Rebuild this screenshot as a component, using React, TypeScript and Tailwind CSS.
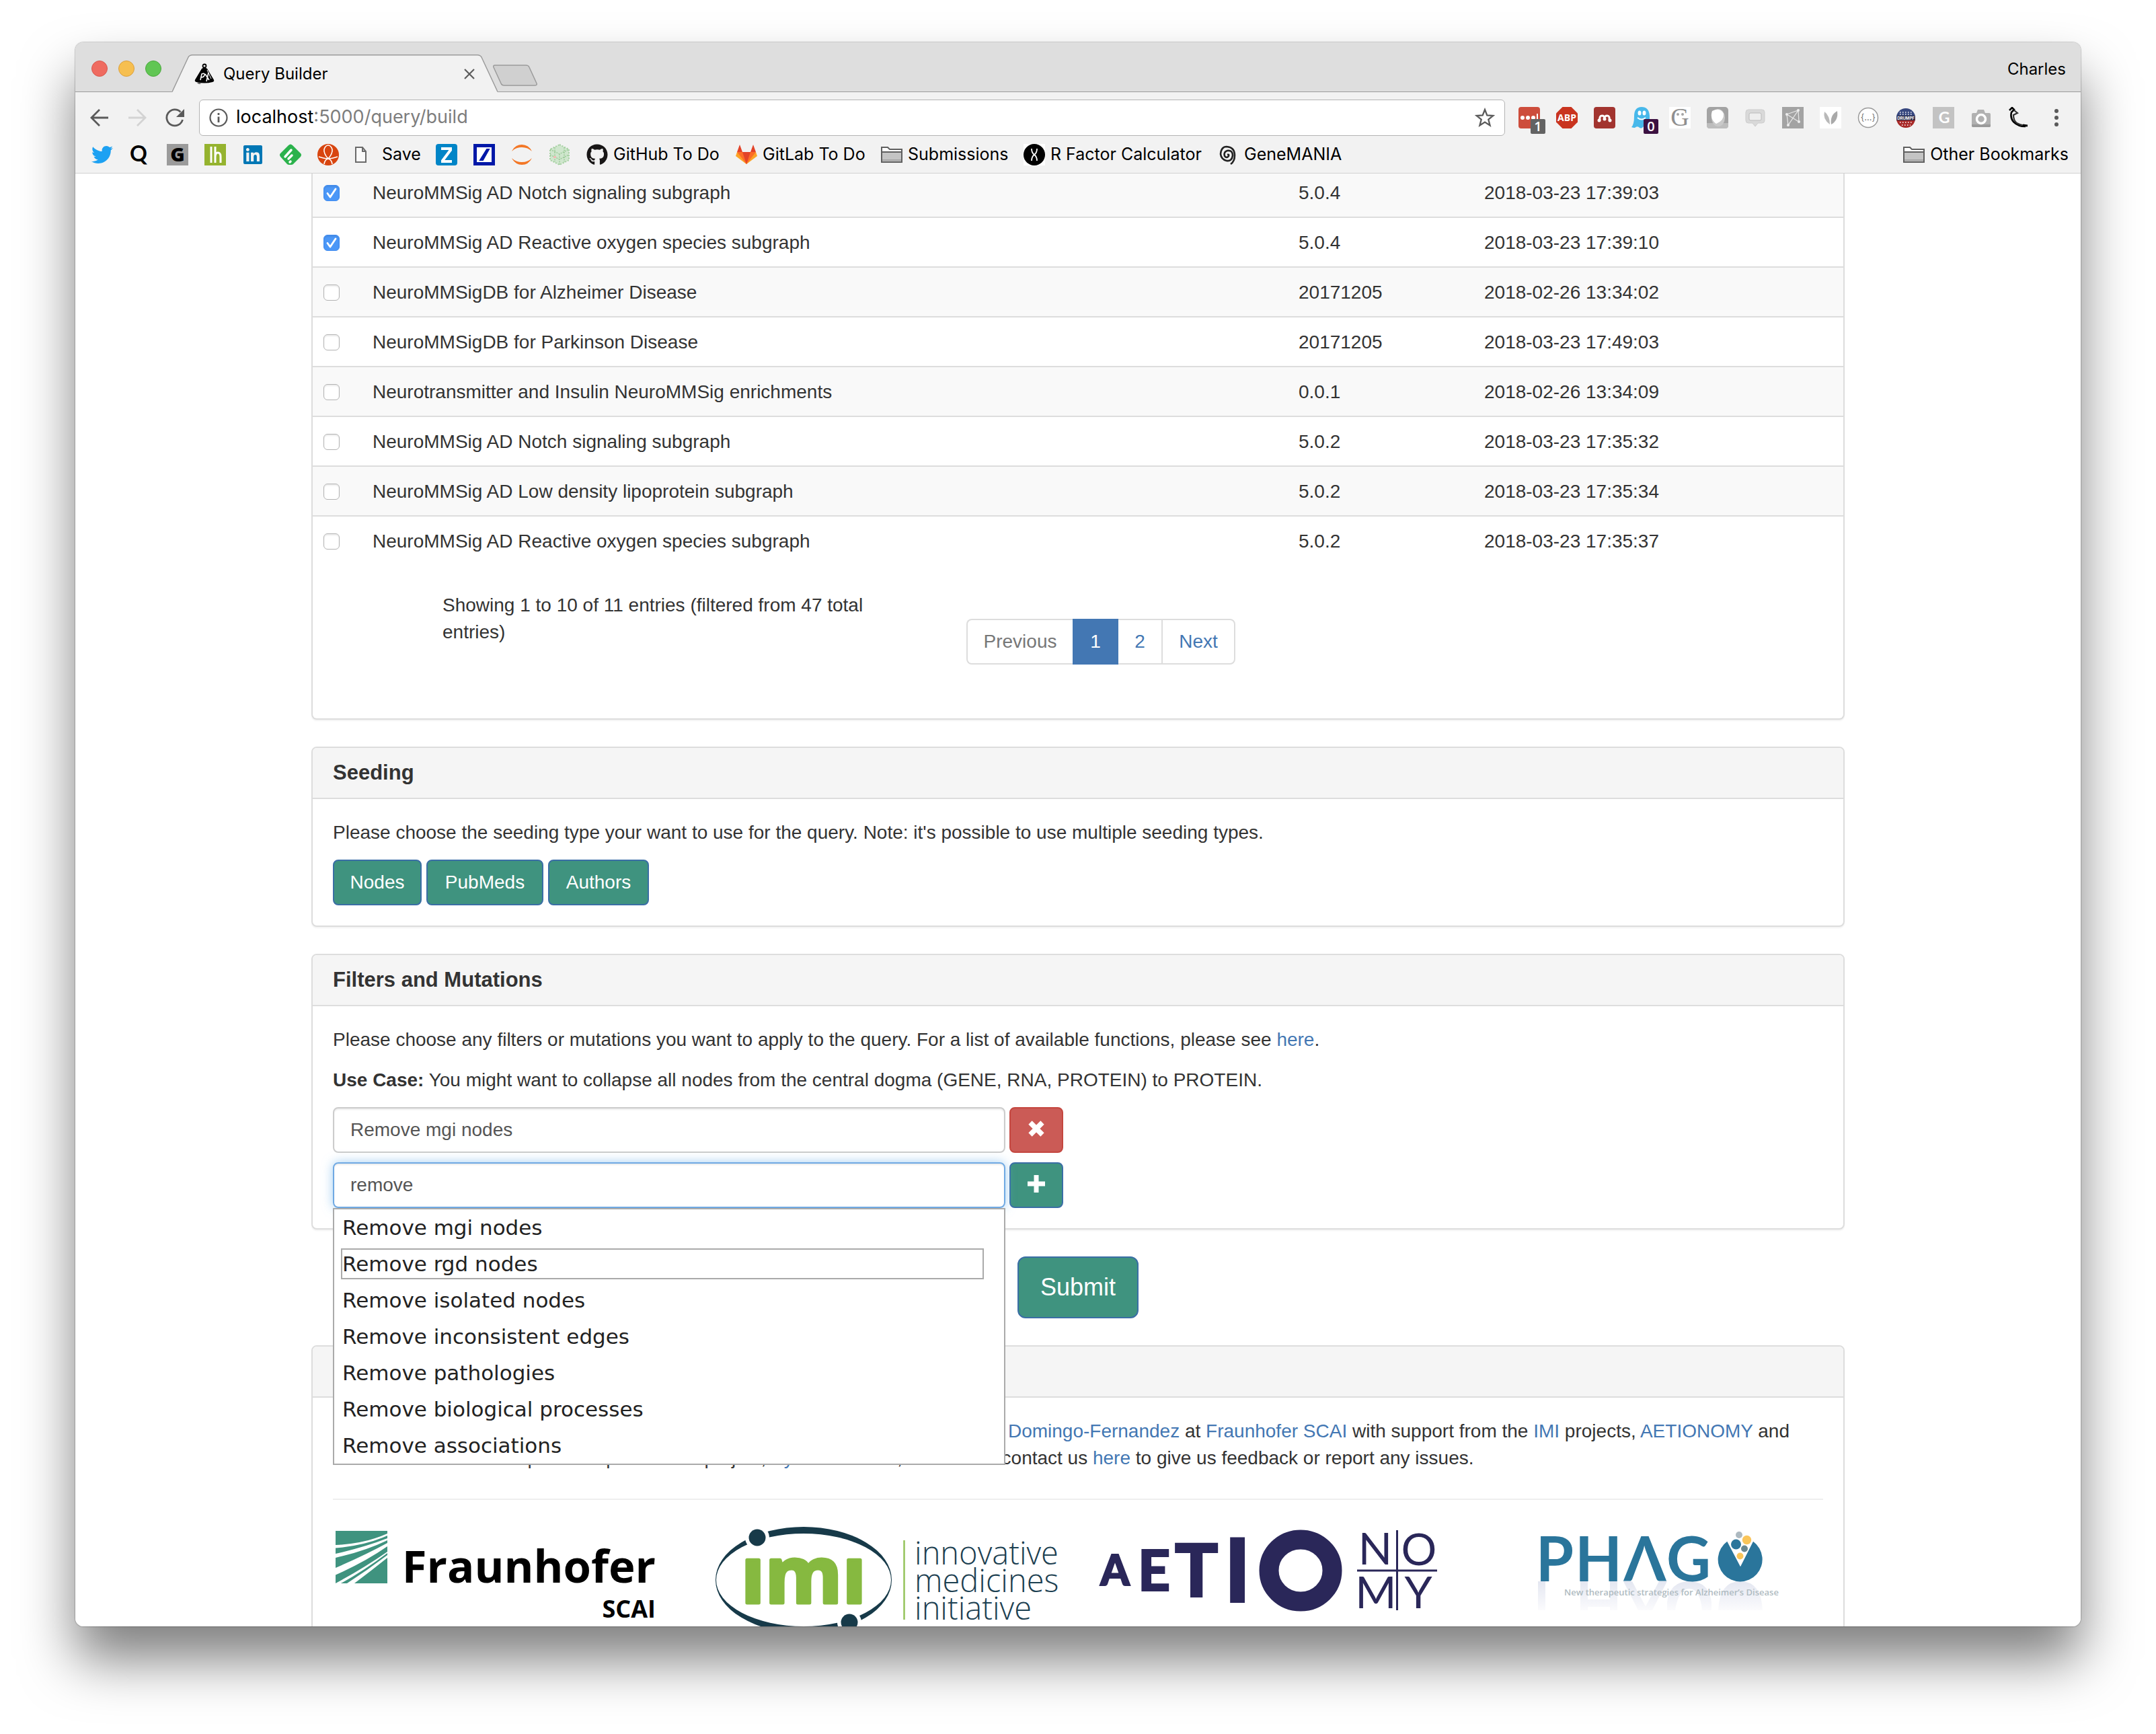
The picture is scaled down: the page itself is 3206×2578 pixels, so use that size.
import React, { useState } from "react";
import { FaGithub, FaTwitter, FaLinkedin } from "react-icons/fa";

const ui = "font-['Inter',sans-serif]";

function Fav({ children, label, box = "0 0 32 32" }: { children: React.ReactNode; label: string; box?: string }) {
  return (
    <svg viewBox={box} className="block h-8 w-8 shrink-0" role="img" aria-label={label}>
      {children}
    </svg>
  );
}

function Folder() {
  return (
    <Fav label="folder">
      <path d="M1 27V5h9l3 3h18v19z" fill="#fff" stroke="#5f5f5f" strokeWidth="2" />
      <path d="M2 13h28v13H2z" fill="#c4c4c4" />
      <path d="M1 12h30M1 27h30" stroke="#5f5f5f" strokeWidth="2" />
      <path d="M2 24h28" stroke="#a5a5a5" strokeWidth="2" />
    </Fav>
  );
}

function Bookmark({ icon, text, cls }: { icon: React.ReactNode; text?: string; cls: string }) {
  return (
    <a href="#" className={"flex shrink-0 items-center gap-2 whitespace-nowrap " + cls}>
      {icon}
      {text}
    </a>
  );
}

function TabStrip() {
  return (
    <div className="flex h-[74px] shrink-0 border-b border-[#9b9b9b] bg-[#dedede] pr-[22px] pl-6">
      <div className="flex h-[78px] items-center gap-4">
        <button aria-label="Close" className="h-6 w-6 rounded-full border border-[#d8584f] bg-[#ef6b60]" />
        <button aria-label="Minimize" className="h-6 w-6 rounded-full border border-[#dba03f] bg-[#f6bf50]" />
        <button aria-label="Zoom" className="h-6 w-6 rounded-full border border-[#4aa83d] bg-[#61c654]" />
      </div>
      <div className="relative mt-[18px] ml-4 h-14 w-[484px]">
        <svg viewBox="0 0 484 56" preserveAspectRatio="none" className="absolute inset-0 h-full w-full" aria-hidden="true">
          <path d="M0 56 L24 4 Q26 1 30 1 H454 Q458 1 460 4 L484 56 Z" fill="#f2f2f2" />
          <path d="M0 55.5 L24 4 Q26 .8 30 .8 H454 Q458 .8 460 4 L484 55.5" fill="none" stroke="#9b9b9b" strokeWidth="1.5" />
        </svg>
        <div className={"relative flex h-full items-center pt-0.5 pr-[34px] pl-8 text-2xl text-black " + ui}>
          <svg viewBox="0 0 32 32" className="mr-3 h-8 w-8" role="img" aria-label="PyBEL">
            <circle cx="16" cy="4" r="2.5" fill="none" stroke="#000" strokeWidth="1.8" />
            <path d="M12 8q4-3 8 0l9 15q3 4-1 5-12 3-24 0-4-1-1-5z" fill="#000" />
            <path d="M5 29q3 3 6 1z" fill="#000" />
            <path d="M10 25l2-9q5-2 4 2-1 3-5 3M17 16l6 9M22 14l-3 13" fill="none" stroke="#fff" strokeWidth="1.6" />
            <path d="M20 10l6 13" stroke="#fff" strokeWidth="1" />
          </svg>
          <span>Query Builder</span>
          <button aria-label="Close tab" className="ml-auto">
            <svg viewBox="0 0 16 16" className="h-4 w-4" aria-hidden="true">
              <path d="M1 1l14 14M15 1L1 15" stroke="#5c5c5c" strokeWidth="2.2" />
            </svg>
          </button>
        </div>
      </div>
      <button aria-label="New tab" className="mt-[33px] -ml-2 h-8">
        <svg viewBox="0 0 68 32" className="h-8 w-[68px]" aria-hidden="true">
          <path d="M4 1h46q4 0 5 3l11 24q1 3-3 3H18q-4 0-5-3L2 4Q1 1 4 1z" fill="#d0d0d0" stroke="#9b9b9b" strokeWidth="1.5" />
        </svg>
      </button>
      <button className={"ml-auto h-20 text-2xl text-black " + ui}>Charles</button>
    </div>
  );
}

function Extensions() {
  return (
    <div className="flex items-center gap-6">
      <button className="relative" aria-label="LastPass">
        <Fav label="LastPass">
          <rect width="32" height="32" rx="4" fill="#cd4d3c" />
          <circle cx="6" cy="16" r="3" fill="#fff" /><circle cx="14" cy="16" r="3" fill="#fff" /><circle cx="22" cy="16" r="3" fill="#fff" />
          <path d="M28 10v12" stroke="#fff" strokeWidth="2" />
        </Fav>
        <span className="absolute top-[18px] left-[18px] h-[22px] w-[22px] rounded-xs bg-[#636363] text-center font-['Open_Sans',sans-serif] text-xl leading-[22px] font-semibold text-white">1</span>
      </button>
      <button aria-label="Adblock Plus">
        <Fav label="Adblock Plus">
          <path d="M9.5 0h13L32 9.5v13L22.5 32h-13L0 22.500v-13z" fill="#c9341f" />
          <text x="16" y="21" textAnchor="middle" fontSize="14" fontWeight="700" fill="#fff" fontFamily="Open Sans, sans-serif">ABP</text>
        </Fav>
      </button>
      <button aria-label="Mendeley">
        <Fav label="Mendeley">
          <rect width="32" height="32" rx="4" fill="#a2342f" />
          <path d="M9 20q-1-7 3-7t4 4q0-4 4-4t3 7" fill="none" stroke="#fff" strokeWidth="3" />
          <circle cx="16" cy="18" r="2.500" fill="#fff" /><circle cx="8" cy="20" r="2.500" fill="#fff" /><circle cx="24" cy="20" r="2.500" fill="#fff" />
        </Fav>
      </button>
      <button className="relative" aria-label="Ghostery">
        <Fav label="Ghostery">
          <path d="M4 14Q4 0 15 0t12 13v17q-3 2-5 0-3-2-5 0-3 3-6 0-3-2-6 1-3 0-5-1 4-4 4-16z" fill="#48b8ea" />
          <ellipse cx="12" cy="9" rx="2.500" ry="3.500" fill="#fff" /><ellipse cx="19" cy="9" rx="2.500" ry="3.500" fill="#fff" />
          <path d="M9 16q6 5 12 0" fill="none" stroke="#fff" strokeWidth="2" />
        </Fav>
        <span className="absolute top-[18px] left-[18px] h-[22px] w-[22px] rounded-xs bg-[#3c1141] text-center font-['Open_Sans',sans-serif] text-xl leading-[22px] font-semibold text-white">0</span>
      </button>
      <button aria-label="Grammar">
        <Fav label="Grammar">
          <rect width="32" height="32" fill="#fff" />
          <text x="16" y="28" textAnchor="middle" fontSize="38" fill="#8f8f8f" fontFamily="Liberation Serif, serif">G</text>
          <circle cx="13" cy="11" r="2" fill="#a5a5a5" /><circle cx="20" cy="11" r="2" fill="#a5a5a5" />
        </Fav>
      </button>
      <button aria-label="Pearl">
        <Fav label="Pearl">
          <rect width="32" height="32" rx="5" fill="#a3a3a3" />
          <path d="M0 24h32v4q0 4-4 4H4q-4 0-4-4z" fill="#bdbdbd" />
          <ellipse cx="17" cy="16" rx="10" ry="13" fill="#c9c9c9" />
          <path d="M8 6q12-6 17 4 1 10-11 15Q4 18 8 6z" fill="#fff" />
        </Fav>
      </button>
      <button aria-label="Comments">
        <Fav label="Comments">
          <path d="M6 4h20q4 0 4 4v12q0 4-4 4h-6l-4 5-4-5H6q-4 0-4-4V8q0-4 4-4z" fill="#d9d9d9" stroke="#cdcdcd" />
          <rect x="7" y="9" width="18" height="11" rx="2" fill="#eee" stroke="#bbb" />
        </Fav>
      </button>
      <button aria-label="Graph">
        <Fav label="Graph">
          <rect width="32" height="32" fill="#a3a3a3" />
          <path d="M7 11L24 5 9 27 7 11M24 5l1 17L7 11" fill="none" stroke="#e6e6e6" strokeWidth="1.3" />
          <circle cx="7" cy="11" r="2" fill="#eee" /><circle cx="24" cy="5" r="2" fill="#eee" /><circle cx="9" cy="27" r="2" fill="#eee" /><circle cx="25" cy="22" r="2" fill="#eee" />
        </Fav>
      </button>
      <button aria-label="Leaf">
        <Fav label="Leaf">
          <rect width="32" height="32" fill="#fff" />
          <path d="M15 26Q4 18 7 7q8 6 8 19z" fill="#b9b9b9" /><path d="M17 26Q15 12 26 6q2 14-9 20z" fill="#a9a9a9" />
        </Fav>
      </button>
      <button aria-label="Braces">
        <Fav label="Braces">
          <circle cx="16" cy="16" r="14.500" fill="#fff" stroke="#9a9a9a" strokeWidth="1.5" />
          <text x="16" y="20" textAnchor="middle" fontSize="13" fill="#777" fontFamily="Inter, sans-serif">{"{...}"}</text>
        </Fav>
      </button>
      <button aria-label="Drumpf">
        <Fav label="Drumpf">
          <circle cx="16" cy="16" r="14" fill="#37477f" />
          <path d="M2 17h28a14 14 0 0 1-28 0z" fill="#a82a28" />
          <path d="M2.500 13h27v7h-27z" fill="#2b2b46" />
          <path d="M7 8h19M7 11h19" stroke="#fff" strokeWidth="1.5" strokeDasharray="1.500 2.500" />
          <path d="M7 23h19M10 27h13" stroke="#fff" strokeWidth="1.5" strokeDasharray="1.500 2.500" />
          <text x="16" y="18.500" textAnchor="middle" fontSize="6" fontWeight="700" fill="#fff" fontFamily="Inter, sans-serif">DRUMPF</text>
        </Fav>
      </button>
      <button aria-label="G tool">
        <Fav label="G tool">
          <rect width="32" height="32" fill="#c3c3c3" />
          <text x="17" y="24" textAnchor="middle" fontSize="23" fontWeight="700" fill="#fff" fontFamily="Lato, sans-serif">G</text>
        </Fav>
      </button>
      <button aria-label="Camera">
        <Fav label="Camera">
          <path d="M4 9h5l2-5h9l2 5h6q2 0 2 2v17q0 2-2 2H4q-2 0-2-2V11q0-2 2-2z" fill="#b1b1b1" />
          <path d="M2 26h28v2q0 2-2 2H4q-2 0-2-2z" fill="#9a9a9a" />
          <circle cx="16" cy="18" r="6.500" fill="#b1b1b1" stroke="#fff" strokeWidth="3.500" />
        </Fav>
      </button>
      <button aria-label="Flask">
        <Fav label="Flask">
          <path d="M2 5l4-4 3 3-4 4q-2 8 3 14 7 7 18 7" fill="none" stroke="#000" strokeWidth="2.600" />
          <path d="M9 5l5 4-6 3q0 8 5 12 5 3 12 4" fill="none" stroke="#333" strokeWidth="2.200" />
          <path d="M22 27l7 1" stroke="#000" strokeWidth="3" />
        </Fav>
      </button>
    </div>
  );
}

function Toolbar() {
  return (
    <div className="flex h-[75px] shrink-0 items-center bg-[#f2f2f2] pr-7 pl-[22px]">
      <button aria-label="Back">
        <svg viewBox="0 0 28 28" className="h-7 w-7" aria-hidden="true"><path d="M27 14H3M14 2L2 14l12 12" fill="none" stroke="#5a5a5a" strokeWidth="2.800" /></svg>
      </button>
      <button aria-label="Forward" className="ml-7" disabled>
        <svg viewBox="0 0 28 28" className="h-7 w-7" aria-hidden="true"><path d="M1 14h24M14 2l12 12-12 12" fill="none" stroke="#d3d3d3" strokeWidth="2.800" /></svg>
      </button>
      <button aria-label="Reload" className="ml-7">
        <svg viewBox="0 0 28 28" className="h-7 w-7" aria-hidden="true"><path d="M25.500 17A12 12 0 1 1 22.500 5.500" fill="none" stroke="#5a5a5a" strokeWidth="2.800" /><path d="M28 1v12H16z" fill="#5a5a5a" /></svg>
      </button>
      <div className={"mr-5 ml-[22px] flex h-[54px] flex-1 items-center rounded-md border border-[#b4b4b4] bg-white pr-3.5 pl-3.5 text-[27px] text-black " + ui}>
        <svg viewBox="0 0 28 28" className="mr-3 h-7 w-7" role="img" aria-label="Site information">
          <circle cx="14" cy="14" r="12.500" fill="none" stroke="#5a5a5a" strokeWidth="2.200" />
          <path d="M14 12.500V21M14 7v3" stroke="#5a5a5a" strokeWidth="2.800" />
        </svg>
        <span>localhost</span><span className="text-[#7d7d7d]">:5000/query/build</span>
        <button aria-label="Bookmark this page" className="ml-auto">
          <svg viewBox="0 0 30 30" className="h-[30px] w-[30px]" aria-hidden="true"><path d="M15 3l3.300 8.400 9 .6-7 5.700 2.300 8.800L15 21.600l-7.600 4.900 2.300-8.800-7-5.700 9-.6z" fill="none" stroke="#5a5a5a" strokeWidth="2.300" /></svg>
        </button>
      </div>
      <Extensions />
      <button aria-label="Menu" className="ml-8">
        <svg viewBox="0 0 16 32" className="h-8 w-4" aria-hidden="true"><circle cx="8" cy="6" r="3" fill="#5a5a5a" /><circle cx="8" cy="16" r="3" fill="#5a5a5a" /><circle cx="8" cy="26" r="3" fill="#5a5a5a" /></svg>
      </button>
    </div>
  );
}

function BookmarksBar() {
  return (
    <div className={"flex h-[46px] shrink-0 items-center border-b border-[#d2d2d2] bg-[#f2f2f2] pr-[18px] pb-2.5 pl-6 text-[25px] text-black " + ui}>
      <Bookmark cls="w-14" icon={<FaTwitter className="h-8 w-8 text-[#1da1f2]" aria-label="Twitter" />} />
      <Bookmark cls="w-14" icon={<Fav label="Quora"><text x="14" y="26" textAnchor="middle" fontSize="32" fontWeight="700" fontFamily="Lato, sans-serif">Q</text></Fav>} />
      <Bookmark cls="w-14" icon={<Fav label="Grid"><rect width="32" height="32" fill="#9b9b9b" /><text x="16" y="26" textAnchor="middle" fontSize="29" fontWeight="800" fontFamily="Open Sans, sans-serif">G</text></Fav>} />
      <Bookmark cls="w-14" icon={<Fav label="lh"><rect width="32" height="32" fill="#95b32f" /><path d="M10 4v24M16 4v24M16 20q0-7 4-7t4 6v9" fill="none" stroke="#fff" strokeWidth="3" /></Fav>} />
      <Bookmark cls="w-14" icon={<FaLinkedin className="h-8 w-8 text-[#0077b5]" aria-label="LinkedIn" />} />
      <Bookmark cls="w-14" icon={<Fav label="Feedly"><path d="M13 2q3-3 6 0l12 12q2 2 0 5L20 30q-1 1-3 1h-3q-2 0-3-1L1 19q-2-3 0-5z" fill="#2bb24c" /><path d="M8 19L17 9M13 22l5-5M15 27l1-1" stroke="#fff" strokeWidth="3.500" strokeLinecap="round" /></Fav>} />
      <Bookmark cls="w-14" icon={<Fav label="Knot"><circle cx="16" cy="16" r="16" fill="#d8450f" /><path d="M16 22Q9 14 10 8q2-6 6-6t6 6q1 6-6 14zM2 19q9 3 14 3 5 0 14-3M10 30q1-7 6-8 5 1 6 8" fill="none" stroke="#fff" strokeWidth="1.600" /></Fav>} />
      <Bookmark cls="w-[120px]" text="Save" icon={<Fav label="page" box="-8 0 32 32"><path d="M-7 5H3l5 6v16H-7zM3 5v6h5" fill="#fafafa" stroke="#6a6a6a" strokeWidth="2" /></Fav>} />
      <Bookmark cls="w-14" icon={<Fav label="Zotero"><rect width="32" height="32" rx="4" fill="#0085c7" /><path d="M8 7h14v2L10 25M8 26h16" fill="none" stroke="#fff" strokeWidth="4" /></Fav>} />
      <Bookmark cls="w-14" icon={<Fav label="Deutsche Bank"><rect width="32" height="32" fill="#0018a8" /><rect x="5" y="5" width="22" height="22" fill="#fff" /><path d="M10 24L20 8h3L14 24z" fill="#0018a8" stroke="#0018a8" strokeWidth="2" /></Fav>} />
      <Bookmark cls="w-14" icon={<Fav label="Jupyter"><path d="M1 11q5-10 15-10t15 10q-6-6-15-6T1 11zM1 21q5 10 15 10t15-10q-6 6-15 6T1 21z" fill="#f37726" /></Fav>} />
      <Bookmark cls="w-14" icon={<Fav label="Lattice"><path d="M16 1l14 7v16l-14 7-14-7V8z" fill="#cfe6cd" stroke="#a5d0a1" strokeWidth="2" strokeDasharray="2 2" /><path d="M2 8l14 7 14-7M16 15v16M2 16l14 7 14-7M9 5v22M23 5v22" fill="none" stroke="#9ccb98" strokeWidth="1.5" strokeDasharray="2 1.500" /><rect x="7" y="18" width="4" height="3" fill="#eebcb4" /></Fav>} />
      <Bookmark cls="w-[222px]" text="GitHub To Do" icon={<FaGithub className="h-8 w-8 shrink-0 text-[#181616]" aria-label="GitHub" />} />
      <Bookmark cls="w-[216px]" text="GitLab To Do" icon={<Fav label="GitLab"><path d="M16 30L0 18l2-6h28l2 6z" fill="#fca326" /><path d="M16 30L2 12h28z" fill="#fc6d26" /><path d="M16 30l-6-18h12z" fill="#e24329" /><path d="M2 12L6 1l4 11zM22 12l4-11 4 11z" fill="#e24329" /></Fav>} />
      <Bookmark cls="w-[212px]" text="Submissions" icon={<Folder />} />
      <Bookmark cls="w-[288px]" text="R Factor Calculator" icon={<Fav label="R Factor"><rect width="32" height="32" fill="#fff" /><circle cx="16" cy="16" r="16" fill="#000" /><path d="M12 7q0 6 4 9t4 9M20 7q0 6-4 9t-4 9" fill="none" stroke="#fff" strokeWidth="1.800" /></Fav>} />
      <Bookmark cls="" text="GeneMANIA" icon={<Fav label="GeneMANIA"><path d="M15 16q3-1 2 2-3 4-6 0-2-6 4-8 8-1 8 7-1 9-9 8-8-2-9-10Q6 4 14 4q12 1 12 13 0 9-6 13" fill="none" stroke="#222" strokeWidth="2.600" /></Fav>} />
      <div className="ml-auto"><Bookmark cls="" text="Other Bookmarks" icon={<Folder />} /></div>
    </div>
  );
}

type Row = { name: string; version: string; date: string; on?: boolean };
const rows: Row[] = [
  { name: "NeuroMMSig AD Notch signaling subgraph", version: "5.0.4", date: "2018-03-23 17:39:03", on: true },
  { name: "NeuroMMSig AD Reactive oxygen species subgraph", version: "5.0.4", date: "2018-03-23 17:39:10", on: true },
  { name: "NeuroMMSigDB for Alzheimer Disease", version: "20171205", date: "2018-02-26 13:34:02" },
  { name: "NeuroMMSigDB for Parkinson Disease", version: "20171205", date: "2018-03-23 17:49:03" },
  { name: "Neurotransmitter and Insulin NeuroMMSig enrichments", version: "0.0.1", date: "2018-02-26 13:34:09" },
  { name: "NeuroMMSig AD Notch signaling subgraph", version: "5.0.2", date: "2018-03-23 17:35:32" },
  { name: "NeuroMMSig AD Low density lipoprotein subgraph", version: "5.0.2", date: "2018-03-23 17:35:34" },
  { name: "NeuroMMSig AD Reactive oxygen species subgraph", version: "5.0.2", date: "2018-03-23 17:35:37" },
];

function Check({ label, initial }: { label: string; initial: boolean }) {
  const [on, setOn] = useState(initial);
  return (
    <span className="relative mt-2 block h-6 w-6">
      <input
        type="checkbox"
        aria-label={label}
        checked={on}
        onChange={() => setOn(!on)}
        className="block h-6 w-6 appearance-none rounded-md border border-[#b3b3b3] bg-white shadow-[inset_0_2px_2px_rgba(0,0,0,0.08)] checked:border-[#3f8bf0] checked:bg-[#4b97f7]"
      />
      {on && (
        <svg viewBox="0 0 24 24" className="pointer-events-none absolute inset-0 h-6 w-6" aria-hidden="true">
          <path d="M6 12.500l4 5.500 8-12" fill="none" stroke="#fff" strokeWidth="2.800" strokeLinecap="round" strokeLinejoin="round" />
        </svg>
      )}
    </span>
  );
}

function NetworkTable() {
  return (
    <section className="rounded-b-lg border-2 border-t-0 border-[#ddd] bg-white shadow-[0_2px_2px_rgba(0,0,0,0.05)]">
      <table className="w-full table-fixed border-collapse text-left">
        <colgroup>
          <col className="w-[73px]" />
          <col />
          <col className="w-[276px]" />
          <col className="w-[550px]" />
        </colgroup>
        <tbody>
          {rows.map((r, i) => (
            <tr key={i} className="border-[#ddd] not-first:border-t-2 odd:bg-[#f9f9f9] [&:first-child>td]:pt-[9px] [&>td]:px-4 [&>td]:pt-[17px] [&>td]:pb-[15px]">
              <td className="align-top"><Check label={r.name + " " + r.version} initial={!!r.on} /></td>
              <td>{r.name}</td>
              <td>{r.version}</td>
              <td>{r.date}</td>
            </tr>
          ))}
        </tbody>
      </table>
      <div className="flex items-start pt-10 pb-20 pl-[193px]">
        <p className="w-[779px] pr-[100px]">Showing 1 to 10 of 11 entries (filtered from 47 total entries)</p>
        <nav aria-label="Pages" className="mt-10 flex h-[68px] rounded-lg text-[#4377b3]">
          <button className="w-[158px] rounded-l-lg border-2 border-r-0 border-[#ddd] text-[#777]">Previous</button>
          <button className="w-[68px] bg-[#4377b3] text-white" aria-current="page">1</button>
          <button className="w-16 border-y-2 border-[#ddd]">2</button>
          <button className="w-[110px] rounded-r-lg border-2 border-[#ddd]">Next</button>
        </nav>
      </div>
    </section>
  );
}

function Panel({ title, children }: { title: string; children: React.ReactNode }) {
  return (
    <section className="mt-10 rounded-lg border-2 border-[#ddd] bg-white shadow-[0_2px_2px_rgba(0,0,0,0.05)]">
      <h3 className="rounded-t-md border-b-2 border-[#ddd] bg-[#f5f5f5] px-[30px] py-5 text-[31px] leading-[34px] font-bold">{title}</h3>
      <div className="p-[30px]">{children}</div>
    </section>
  );
}

const green = "border-2 border-[#3a6ea5] bg-[#3f937f] text-white";
const link = "text-[#4377b3]";
const options = [
  "Remove mgi nodes",
  "Remove rgd nodes",
  "Remove isolated nodes",
  "Remove inconsistent edges",
  "Remove pathologies",
  "Remove biological processes",
  "Remove associations",
];

function Filters() {
  const [first, setFirst] = useState("Remove mgi nodes");
  const [second, setSecond] = useState("remove");
  return (
    <Panel title="Filters and Mutations">
      <p className="mb-5">Please choose any filters or mutations you want to apply to the query. For a list of available functions, please see <a href="#" className={link}>here</a>.</p>
      <p className="mb-5"><b>Use Case:</b> You might want to collapse all nodes from the central dogma (GENE, RNA, PROTEIN) to PROTEIN.</p>
      <div className="mb-3.5 flex gap-1.5">
        <input aria-label="Filter 1" value={first} onChange={(e) => setFirst(e.target.value)} className="h-[68px] w-[1000px] rounded-lg border-2 border-[#ccc] px-6 text-[#555] shadow-[inset_0_2px_2px_rgba(0,0,0,0.075)]" />
        <button aria-label="Remove filter" className="flex h-[68px] w-20 items-center justify-center rounded-lg border-2 border-[#c4463f] bg-[#cb5b56]">
          <svg viewBox="0 0 26 26" className="mb-1 h-[26px] w-[26px]" aria-hidden="true"><path d="M4 4l18 18M22 4L4 22" stroke="#fff" strokeWidth="7.500" /></svg>
        </button>
      </div>
      <div className="flex gap-1.5">
        <div className="relative w-[1000px]">
          <input aria-label="Filter 2" value={second} onChange={(e) => setSecond(e.target.value)} className="h-[68px] w-full rounded-lg border-2 border-[#6fa9e3] px-6 text-[#555] shadow-[inset_0_2px_2px_rgba(0,0,0,0.075),0_0_16px_rgba(102,175,233,0.6)] outline-none" />
          <ul role="listbox" aria-label="Suggestions" className="absolute top-full left-0 z-10 flex w-full flex-col gap-2 border-2 border-[#aaa] bg-white py-1 pr-[30px] pl-2.5 font-['DejaVu_Sans',sans-serif] text-[31px] leading-[42px] text-[#222]">
            {options.map((o, i) => (
              <li key={o} role="option" aria-selected={i === 1} className={i === 1 ? "border-2 border-[#aaa]" : "border-2 border-transparent"}>{o}</li>
            ))}
          </ul>
        </div>
        <button aria-label="Add filter" className={"flex h-[68px] w-20 items-center justify-center rounded-lg " + green}>
          <svg viewBox="0 0 26 26" className="mb-1 h-[26px] w-[26px]" aria-hidden="true"><path d="M13 0v26M0 13h26" stroke="#fff" strokeWidth="7" /></svg>
        </button>
      </div>
    </Panel>
  );
}

function Fraunhofer() {
  return (
    <svg viewBox="0 0 509 150" className="w-full" role="img" aria-label="Fraunhofer SCAI">
      <rect x="4" y="6" width="77" height="78" fill="#3f937f" />
      <g fill="#fff">
        <path d="M4 27Q48 25 81 10v3Q48 28 4 31.500z" />
        <path d="M4 40Q48 30 81 17v3Q48 36 4 46z" />
        <path d="M4 61Q48 42 81 24v5Q48 52 4 71.500z" />
        <path d="M4 84Q45 62 81 37v2Q45 66 12 84z" />
        <path d="M21 84Q52 64 81 42v4Q56 66 32 84z" />
      </g>
      <g fontFamily="Open Sans, sans-serif" fontWeight="700" fill="#000" textAnchor="end">
        <text x="480" y="83" fontSize="67">Fraunhofer</text>
        <text x="480" y="135" fontSize="36">SCAI</text>
      </g>
    </svg>
  );
}

function Imi() {
  return (
    <svg viewBox="0 0 509 160" className="w-full" role="img" aria-label="imi innovative medicines initiative">
      <path fillRule="evenodd" fill="#173a49" d="M0 79a131 79 0 0 1 262 0 131 79 0 0 1-262 0zM1 79a130 69 0 0 0 260 0 130 69 0 0 0-260 0z" />
      <circle cx="62" cy="16" r="18" fill="#fff" /><circle cx="62" cy="16" r="12.500" fill="#173a49" />
      <circle cx="199" cy="142" r="18" fill="#fff" /><circle cx="199" cy="142" r="12.500" fill="#173a49" />
      <text x="131" y="113" textAnchor="middle" fontSize="117" fontWeight="700" fontFamily="Open Sans, sans-serif" fill="#86b940" stroke="#86b940" strokeWidth="5" strokeLinejoin="round">ımı</text>
      <path d="M280.500 20v118" stroke="#95c35b" strokeWidth="2.500" />
      <g fontFamily="Open Sans, sans-serif" fontWeight="300" fontSize="47" fill="#1c4051">
        <text x="296" y="56">innovative</text>
        <text x="296" y="97">medicines</text>
        <text x="296" y="138">initiative</text>
      </g>
    </svg>
  );
}

function Aetionomy() {
  return (
    <svg viewBox="0 0 509 150" className="w-full" role="img" aria-label="AETIONOMY">
      <g fontFamily="Lato, sans-serif" fontWeight="900" fill="#2a2759" stroke="#2a2759" strokeWidth="2" textAnchor="middle">
        <text x="25" y="87" fontSize="62">A</text>
        <text x="83" y="95" fontSize="84">E</text>
        <text x="146" y="104" fontSize="108">T</text>
        <text x="207" y="112" fontSize="131">I</text>
      </g>
      <ellipse cx="301" cy="65" rx="47" ry="46" fill="none" stroke="#2a2759" strokeWidth="29" />
      <path d="M444.500 5v119M385 65h119" stroke="#2a2759" strokeWidth="3" />
      <g fontFamily="Lato, sans-serif" fontSize="66" fill="#2a2759" textAnchor="middle">
        <text x="412" y="56">N</text>
        <text x="477" y="57">O</text>
        <text x="413" y="121">M</text>
        <text x="476" y="121">Y</text>
      </g>
    </svg>
  );
}

function Phago() {
  return (
    <svg viewBox="0 0 509 150" className="w-full" role="img" aria-label="PHAGO">
      <defs>
        <linearGradient id="fade" x1="0" y1="81" x2="0" y2="124" gradientUnits="userSpaceOnUse">
          <stop offset="0" stopColor="#e4e7f1" /><stop offset="1" stopColor="#fbfbfd" />
        </linearGradient>
      </defs>
      <g fill="url(#fade)">
        <path d="M85 81h11v43H85zM148 81h11v43h-11zM192 81h11v43h-11zM159 108h33v11h-33zM212 81h13l23 43h-14zM265 81h12l-22 43h-13z" />
        <path d="M277 112q4-31 33-31t33 31v12h-14q-3-32-19-32t-21 32h-12zM353 124q2-43 33-43t33 43z" />
      </g>
      <g fontFamily="Lato, sans-serif" fontWeight="700" fontSize="91" fill="#2a759b" textAnchor="middle">
        <text x="110" y="81">P</text>
        <text x="175" y="81">H</text>
        <text x="244" y="81">Λ</text>
        <text x="309" y="81">G</text>
      </g>
      <path d="M366.300 21.700L386 59.300 405 21.700A33 33 0 1 1 366.300 21.700z" fill="#2a759b" />
      <circle cx="384" cy="12" r="5" fill="#adb9c0" /><circle cx="395.500" cy="19.500" r="6.700" fill="#fac55a" />
      <circle cx="379.500" cy="26" r="7.500" fill="#2a759b" /><circle cx="392" cy="32.500" r="5" fill="#6b8890" />
      <circle cx="385.500" cy="43.500" r="5" fill="#fac55a" />
      <text x="124" y="102" fontSize="13" fontWeight="600" fontFamily="Open Sans, sans-serif" fill="#afbbc1">New therapeutic strategies for Alzheimer’s Disease</text>
    </svg>
  );
}

export default function App() {
  return (
    <div className="flex h-screen flex-col bg-white px-[112px] pt-[63px] pb-[160px]">
      <main className="flex min-h-0 flex-1 flex-col overflow-hidden rounded-xl bg-white shadow-[0_0_2px_rgba(0,0,0,0.6),0_50px_80px_rgba(0,0,0,0.5)]">
        <TabStrip />
        <Toolbar />
        <BookmarksBar />
        <div className="min-h-0 flex-1 overflow-hidden bg-white font-['Liberation_Sans',sans-serif] text-[28px] leading-10 text-[#333]">
          <div className="mx-auto max-w-[2280px]">
            <NetworkTable />
            <Panel title="Seeding">
              <p className="mb-5">Please choose the seeding type your want to use for the query. Note: it's possible to use multiple seeding types.</p>
              <div className="flex gap-[7px]">
                <button className={"h-[68px] w-[132px] rounded-lg " + green}>Nodes</button>
                <button className={"h-[68px] w-[174px] rounded-lg " + green}>PubMeds</button>
                <button className={"h-[68px] w-[150px] rounded-lg " + green}>Authors</button>
              </div>
            </Panel>
            <Filters />
            <div className="mt-10 flex justify-center">
              <button className={"h-[92px] rounded-xl px-8 text-[36px] " + green}>Submit</button>
            </div>
            <Panel title="About">
              <p>
                BEL Commons is developed, and maintained by <a href="#" className={link}>Charles Tapley Hoyt</a> and <a href="#" className={link}>Daniel Domingo-Fernandez</a> at <a href="#" className={link}>Fraunhofer SCAI</a> with support from the <a href="#" className={link}>IMI</a> projects, <a href="#" className={link}>AETIONOMY</a> and <a href="#" className={link}>PHAGO</a>. It is built on top of the open source project, <a href="#" className={link}>PyBEL</a>. Please, feel free to contact us <a href="#" className={link}>here</a> to give us feedback or report any issues.
              </p>
              <hr className="my-10 border-t-2 border-[#eee]" />
              <div className="grid grid-cols-4 gap-[60px]">
                <Fraunhofer />
                <Imi />
                <Aetionomy />
                <Phago />
              </div>
            </Panel>
          </div>
        </div>
      </main>
    </div>
  );
}
